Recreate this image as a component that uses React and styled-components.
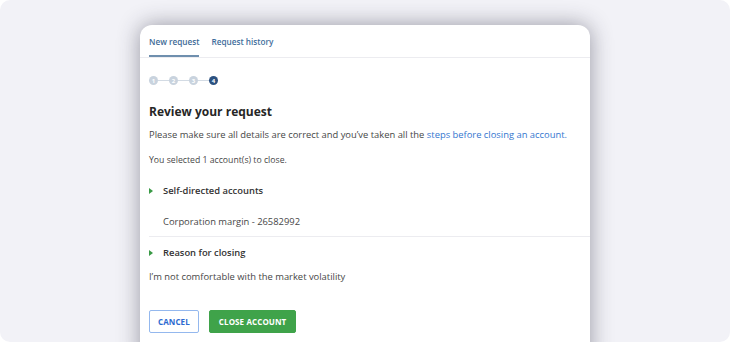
import React from "react";
import styled, { createGlobalStyle } from "styled-components";

const GlobalStyle = createGlobalStyle`
  html, body {
    margin: 0;
    padding: 0;
    background: #ffffff;
  }
  body {
    font-family: "Open Sans", "Noto Sans", sans-serif;
  }
`;

const Frame = styled.div`
  width: 730px;
  height: 342px;
  background: #f2f2f7;
  border-radius: 10px;
  overflow: hidden;
  display: flex;
  justify-content: center;
  align-items: flex-start;
`;

const Card = styled.div`
  margin-top: 25px;
  width: 450px;
  height: 340px;
  background: #ffffff;
  border-radius: 12px;
  box-shadow: 0 0 22px rgba(40, 40, 60, 0.45);
`;

const Tabs = styled.div`
  display: flex;
  gap: 12px;
  height: 32px;
  align-items: flex-end;
  padding: 0 9px;
  border-bottom: 1px solid #ececf0;
`;

const Tab = styled.div`
  font-size: 8.2px;
  font-weight: 600;
  color: ${(p) => (p.active ? "#3e6a96" : "#3f6e9c")};
  padding-bottom: 7px;
  border-bottom: 2px solid ${(p) => (p.active ? "#6f8fae" : "transparent")};
  line-height: 12px;
`;

const Body = styled.div`
  padding: 0 9px;
`;

const Stepper = styled.div`
  display: flex;
  align-items: center;
  margin-top: 18px;
  height: 9px;
`;

const Step = styled.div`
  width: 9px;
  height: 9px;
  border-radius: 50%;
  background: ${(p) => (p.current ? "#2c5180" : "#c9d3de")};
  color: #ffffff;
  font-size: 6px;
  font-weight: 700;
  display: flex;
  align-items: center;
  justify-content: center;
  line-height: 1;
`;

const Link = styled.div`
  width: 11px;
  height: 1px;
  background: #d3dbe4;
`;

const Heading = styled.h2`
  margin: 19px 0 0;
  font-size: 12px;
  line-height: 15px;
  font-weight: 700;
  color: #262626;
`;

const Text = styled.p`
  margin: ${(p) => p.mt || 0}px 0 0;
  font-size: ${(p) => p.size || 9.4}px;
  line-height: 14px;
  color: #474747;
  padding-left: ${(p) => (p.indent ? 14 : 0)}px;
`;

const Anchor = styled.a`
  color: #3577cf;
  text-decoration: none;
`;

const SectionTitle = styled.div`
  display: flex;
  align-items: center;
  gap: 10px;
  margin-top: ${(p) => p.mt}px;
  font-size: 9.4px;
  line-height: 14px;
  font-weight: 600;
  color: #333333;
`;

const Caret = styled.span`
  width: 0;
  height: 0;
  border-top: 3px solid transparent;
  border-bottom: 3px solid transparent;
  border-left: 4px solid #3a9a46;
`;

const Divider = styled.div`
  height: 1px;
  background: #ececf0;
  margin: 7px -9px 0 0;
`;

const Actions = styled.div`
  display: flex;
  gap: 10px;
  margin-top: 26px;
`;

const Button = styled.button`
  height: 23px;
  padding: 0 ${(p) => (p.primary ? 9 : 8)}px;
  border-radius: 2px;
  font-family: "Open Sans", sans-serif;
  font-size: 8px;
  font-weight: 700;
  letter-spacing: 0.1px;
  text-transform: uppercase;
  cursor: pointer;
  background: ${(p) => (p.primary ? "#3fa34a" : "#ffffff")};
  color: ${(p) => (p.primary ? "#ffffff" : "#2c6ad0")};
  border: 1px solid ${(p) => (p.primary ? "#3fa34a" : "#94b8ee")};
`;

export default function App() {
  return (
    <>
      <GlobalStyle />
      <Frame>
        <Card>
          <Tabs>
            <Tab active>New request</Tab>
            <Tab>Request history</Tab>
          </Tabs>
          <Body>
            <Stepper>
              <Step>1</Step>
              <Link />
              <Step>2</Step>
              <Link />
              <Step>3</Step>
              <Link />
              <Step current>4</Step>
            </Stepper>
            <Heading>Review your request</Heading>
            <Text mt={9}>
              Please make sure all details are correct and you’ve taken all the{" "}
              <Anchor href="#">steps before closing an account.</Anchor>
            </Text>
            <Text mt={11} size={8.7}>
              You selected 1 account(s) to close.
            </Text>
            <SectionTitle mt={17}>
              <Caret />
              Self-directed accounts
            </SectionTitle>
            <Text mt={17} indent>
              Corporation margin - 26582992
            </Text>
            <Divider />
            <SectionTitle mt={9}>
              <Caret />
              Reason for closing
            </SectionTitle>
            <Text mt={10}>I’m not comfortable with the market volatility</Text>
            <Actions>
              <Button>Cancel</Button>
              <Button primary>Close account</Button>
            </Actions>
          </Body>
        </Card>
      </Frame>
    </>
  );
}
